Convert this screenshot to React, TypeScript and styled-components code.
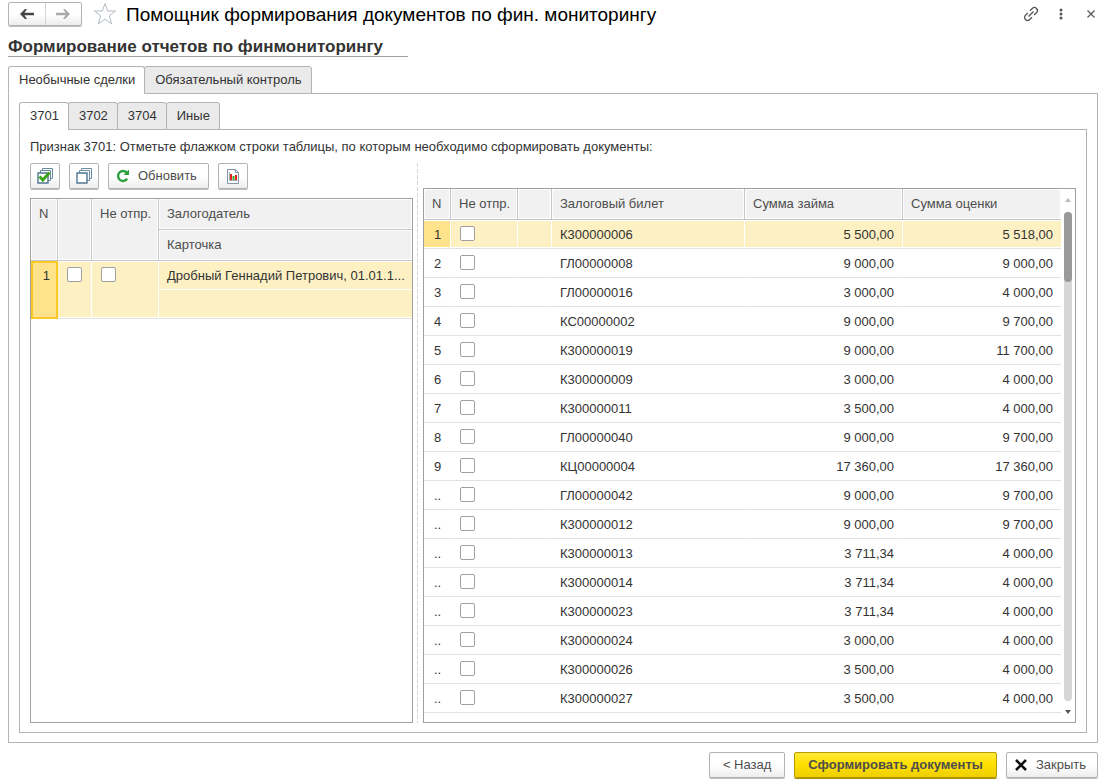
import React, { useState } from "react";
import styled, { createGlobalStyle, css } from "styled-components";

const GlobalStyle = createGlobalStyle`
  * { box-sizing: border-box; }
  body {
    margin: 0;
    background: #fff;
    color: #333;
    font: 13px/16px "Liberation Sans", Arial, sans-serif;
  }
  button, input { font: inherit; color: inherit; }
`;

const Page = styled.main`
  display: flex;
  flex-direction: column;
  min-height: 100vh;
  padding: 2px 6px 6px 8px;
`;

const Header = styled.header`
  display: flex;
  align-items: flex-start;
  height: 25px;
`;

const buttonFace = css`
  border: 1px solid #b3b3b3;
  border-radius: 2px;
  background: linear-gradient(#fff 50%, #ededed);
  box-shadow: 0 1px 0 #bdbdbd;
`;

const NavGroup = styled.nav`
  ${buttonFace}
  display: flex;
  width: 74px;
  height: 24px;
`;

const NavButton = styled.button`
  flex: 1;
  display: grid;
  place-items: center;
  padding: 0;
  border: 0;
  background: none;
  & + & { border-left: 1px solid #d2d2d2; }
`;

const IconButton = styled.button`
  display: grid;
  place-items: center;
  width: 30px;
  height: 24px;
  padding: 0;
  border: 0;
  background: none;
`;

const StarButton = styled(IconButton)`
  margin: 0 6px 0 8px;
`;

const Title = styled.h1`
  flex: 1;
  margin: 0;
  color: #000;
  font-size: 19px;
  line-height: 25px;
  font-weight: 400;
`;

const Tools = styled.div`
  display: flex;
  margin-right: -8px;
`;

const Section = styled.h2`
  width: 400px;
  max-width: 100%;
  height: 20px;
  margin: 10px 0 9px;
  border-bottom: 1px solid #a0a0a0;
  font-size: 17px;
  line-height: 19px;
  font-weight: 700;
  white-space: nowrap;
`;

const TabList = styled.div`
  display: flex;
  margin-bottom: -1px;
`;

const Tab = styled.button<{ $active: boolean }>`
  height: 28px;
  padding: 0 9px 0 10px;
  border: 1px solid #b3b3b3;
  border-bottom-color: ${(p) => (p.$active ? "#fff" : "#b3b3b3")};
  border-radius: 3px 3px 0 0;
  background: ${(p) => (p.$active ? "#fff" : "#eaeaea")};
  white-space: nowrap;
  z-index: 1;
  & + & { margin-left: -1px; }
`;

const Panel = styled.section`
  flex: 1;
  display: flex;
  flex-direction: column;
  padding: 8px 10px 9px;
  border: 1px solid #b3b3b3;
`;

const Message = styled.p`
  margin: 0 0 8px;
  line-height: 17px;
`;

const Panes = styled.div`
  flex: 1;
  display: grid;
  grid-template-columns: minmax(0, 383fr) 10px minmax(0, 653fr);
`;

const Pane = styled.div<{ $offset?: boolean }>`
  display: flex;
  flex-direction: column;
  gap: 9px;
  padding-top: ${(p) => (p.$offset ? "25px" : "0")};
`;

const Splitter = styled.div`
  width: 1px;
  margin-left: 4px;
  background: repeating-linear-gradient(#d4d4d4 0 4px, #fff 4px 6px);
`;

const Toolbar = styled.div`
  display: flex;
  gap: 9px;
`;

const buttonPadding = { plain: "0 13px", icon: "0 6px", leading: "0 11px 0 7px" };

const Button = styled.button<{ $primary?: boolean; $kind?: keyof typeof buttonPadding }>`
  ${buttonFace}
  display: flex;
  align-items: center;
  justify-content: center;
  gap: 8px;
  height: 26px;
  padding: ${(p) => buttonPadding[p.$kind ?? "plain"]};
  color: #4d4d4d;
  white-space: nowrap;
  ${(p) =>
    p.$primary &&
    css`
      border-color: #b39b00;
      background: linear-gradient(#ffea3a, #ffe000 45%, #efcf00);
      box-shadow: 0 1px 0 #a48e00;
      font-weight: 700;
    `}
`;

const GridFrame = styled.div`
  flex: 1;
  display: flex;
  align-items: stretch;
  border: 1px solid #a0a0a0;
`;

const GridBody = styled.div`
  flex: 1;
  min-width: 0;
`;

const Table = styled.table`
  width: 100%;
  table-layout: fixed;
  border-collapse: separate;
  border-spacing: 0;
`;

const Th = styled.th<{ $last?: boolean }>`
  height: 31px;
  padding: 7px 8px;
  border: 0 solid #c6c6c6;
  border-width: 0 ${(p) => (p.$last ? "0" : "1px")} 1px 0;
  background: #f1f1f1;
  box-shadow: inset 0 0 0 1px #fff;
  color: #4d4d4d;
  font-weight: 400;
  text-align: left;
  vertical-align: top;
  white-space: nowrap;
`;

const cellPadding = { text: "7px 8px 5px", number: "7px 4px 5px 10px", check: "6px 9px" };

const Td = styled.td<{
  $selected?: boolean;
  $kind?: keyof typeof cellPadding;
  $align?: "right";
  $soft?: boolean;
}>`
  height: 29px;
  padding: ${(p) => cellPadding[p.$kind ?? "text"]};
  border-bottom: 1px solid ${(p) => (p.$soft ? "#fff" : "#e2e2e2")};
  border-right: ${(p) => (p.$selected ? "1px solid #fff" : "1px solid transparent")};
  text-align: ${(p) => p.$align ?? "left"};
  vertical-align: top;
  white-space: nowrap;
  ${(p) =>
    p.$selected &&
    css`
      background: ${p.$kind === "number" ? "#ffe38c" : "#fdf1c4"};
      box-shadow: inset 0 1px 0 #fff, inset 0 -1px 0 ${p.$soft ? "#fdf1c4" : "#fff"};
    `}
  &:last-child { border-right: 0; }
`;

const FocusTd = styled(Td)`
  padding: 5px 6px;
  border: 2px solid #f9c928;
  box-shadow: none;
  text-align: right;
`;

const SecondLineTd = styled(Td)`
  box-shadow: inset 0 -1px 0 #fff;
`;

const Check = styled.input`
  appearance: none;
  display: block;
  width: 15px;
  height: 15px;
  margin: 0;
  border: 1px solid #a0a0a0;
  border-radius: 2px;
  background: #fff;
  &:checked { background: #5a9e3a; }
`;

const ScrollBar = styled.div`
  display: flex;
  flex-direction: column;
  align-items: center;
  gap: 9px;
  width: 14px;
  padding: 9px 0 8px;
`;

const Track = styled.div`
  flex: 1;
  width: 8px;
  border-radius: 4px;
  background: #d6d6d6;
`;

const Thumb = styled.div`
  height: 70px;
  border-radius: 4px;
  background: #999;
`;

const Footer = styled.footer`
  display: flex;
  justify-content: flex-end;
  gap: 9px;
  margin-top: 9px;
`;

const Arrow = ({ back }: { back?: boolean }) => (
  <svg width="16" height="12" viewBox="0 0 16 12" fill={back ? "#444" : "#aaa"}>
    <path
      d={
        back
          ? "M1 6 6 1H8L5.500 4.700H15V7.300H5.500L8 11H6z"
          : "M15 6 10 1H8L10.500 4.700H1V7.300H10.500L8 11H10z"
      }
    />
  </svg>
);

const StackIcon = ({ checked }: { checked?: boolean }) => (
  <svg width="16" height="16" viewBox="0 0 16 16" fill="#fff" stroke="#6b8ba2">
    <path d="M5.500.5h10v10h-10z" />
    <path d="M3.500 2.500h10v10h-10z" />
    <path d="M1 5h10v10H1z" stroke="#4f7691" strokeWidth="1.400" />
    {checked && <path d="M2.500 8.500 5.800 12 12.500 4.500" fill="none" stroke="#3fa51c" strokeWidth="3" />}
  </svg>
);

const RefreshIcon = () => (
  <svg width="14" height="14" viewBox="0 0 14 14" fill="none">
    <path d="M10.800 3.600A5 5 0 1 0 11.200 9.800" stroke="#2ba13c" strokeWidth="2.400" />
    <path d="M13 .5V6H7.500z" fill="#2ba13c" />
  </svg>
);

const ReportIcon = () => (
  <svg width="16" height="15" viewBox="-1 0 16 15">
    <path d="M1.500.5h8l3 3v11h-11z" fill="#fff" stroke="#8496a5" />
    <path d="M9.500.5v3h3" fill="none" stroke="#8496a5" />
    <path d="M3.500 3v8.500h8" fill="none" stroke="#9fb0bd" />
    <path d="M4 5h2v6H4z" fill="#e8231c" />
    <path d="M6.500 7h2v4h-2z" fill="#36a832" />
    <path d="M9 6h2v5H9z" fill="#e8231c" />
  </svg>
);

const rows = [
  ["К300000006", "5 500,00", "5 518,00"],
  ["ГЛ00000008", "9 000,00", "9 000,00"],
  ["ГЛ00000016", "3 000,00", "4 000,00"],
  ["КС00000002", "9 000,00", "9 700,00"],
  ["К300000019", "9 000,00", "11 700,00"],
  ["К300000009", "3 000,00", "4 000,00"],
  ["К300000011", "3 500,00", "4 000,00"],
  ["ГЛ00000040", "9 000,00", "9 700,00"],
  ["КЦ00000004", "17 360,00", "17 360,00"],
  ["ГЛ00000042", "9 000,00", "9 700,00"],
  ["К300000012", "9 000,00", "9 700,00"],
  ["К300000013", "3 711,34", "4 000,00"],
  ["К300000014", "3 711,34", "4 000,00"],
  ["К300000023", "3 711,34", "4 000,00"],
  ["К300000024", "3 000,00", "4 000,00"],
  ["К300000026", "3 500,00", "4 000,00"],
  ["К300000027", "3 500,00", "4 000,00"],
];

function Tabs({ label, items }: { label: string; items: string[] }) {
  const [active, setActive] = useState(0);
  return (
    <TabList role="tablist" aria-label={label}>
      {items.map((t, i) => (
        <Tab key={t} role="tab" aria-selected={i === active} $active={i === active} onClick={() => setActive(i)}>
          {t}
        </Tab>
      ))}
    </TabList>
  );
}

function Columns({ widths }: { widths: number[] }) {
  return (
    <colgroup>
      {widths.map((w, i) => (
        <col key={i} width={w} />
      ))}
    </colgroup>
  );
}

function PledgerTable() {
  return (
    <Table>
      <Columns widths={[27, 34, 67, 253]} />
      <thead>
        <tr>
          <Th rowSpan={2}>N</Th>
          <Th rowSpan={2} />
          <Th rowSpan={2}>Не отпр.</Th>
          <Th $last>Залогодатель</Th>
        </tr>
        <tr>
          <Th $last>Карточка</Th>
        </tr>
      </thead>
      <tbody>
        <tr>
          <FocusTd rowSpan={2} $selected $kind="number">1</FocusTd>
          <Td rowSpan={2} $selected $kind="check"><Check type="checkbox" aria-label="Выбрать строку 1" /></Td>
          <Td rowSpan={2} $selected $kind="check"><Check type="checkbox" aria-label="Не отправлять строку 1" /></Td>
          <Td $selected $soft>Дробный Геннадий Петрович, 01.01.1...</Td>
        </tr>
        <tr>
          <SecondLineTd $selected />
        </tr>
      </tbody>
    </Table>
  );
}

function TicketTable() {
  return (
    <Table>
      <Columns widths={[27, 67, 34, 193, 158, 158]} />
      <thead>
        <tr>
          <Th>N</Th>
          <Th>Не отпр.</Th>
          <Th />
          <Th>Залоговый билет</Th>
          <Th>Сумма займа</Th>
          <Th $last>Сумма оценки</Th>
        </tr>
      </thead>
      <tbody>
        {rows.map(([ticket, loan, value], i) => (
          <tr key={ticket}>
            <Td $selected={i === 0} $kind="number">{i < 9 ? i + 1 : ".."}</Td>
            <Td $selected={i === 0} $kind="check"><Check type="checkbox" aria-label={`Не отправлять ${ticket}`} /></Td>
            <Td $selected={i === 0} />
            <Td $selected={i === 0}>{ticket}</Td>
            <Td $selected={i === 0} $align="right">{loan}</Td>
            <Td $selected={i === 0} $align="right">{value}</Td>
          </tr>
        ))}
      </tbody>
    </Table>
  );
}

export default function App() {
  return (
    <>
      <GlobalStyle />
      <Page>
        <Header>
          <NavGroup aria-label="История">
            <NavButton aria-label="Назад"><Arrow back /></NavButton>
            <NavButton aria-label="Вперед"><Arrow /></NavButton>
          </NavGroup>
          <StarButton aria-label="В избранное">
            <svg width="24" height="24" viewBox="0 0 24 24" fill="none" stroke="#b4bcc4">
              <path d="M12 1.500 14.700 9H22.500L16.300 13.800 18.700 22 12 17.200 5.300 22 7.700 13.800 1.500 9H9.300z" />
            </svg>
          </StarButton>
          <Title>Помощник формирования документов по фин. мониторингу</Title>
          <Tools>
            <IconButton aria-label="Ссылка">
              <svg width="18" height="18" viewBox="0 0 18 18" fill="none" stroke="#555" strokeWidth="1.300">
                <g transform="rotate(-45 9 9)">
                  <path d="M7.500 6H4.200a3 3 0 0 0 0 6H7.500M10.500 6H13.800a3 3 0 0 1 0 6H10.500M5.500 9h7" />
                </g>
              </svg>
            </IconButton>
            <IconButton aria-label="Меню">
              <svg width="4" height="12" viewBox="0 0 4 12" fill="#555">
                <circle cx="2" cy="2" r="1.500" />
                <circle cx="2" cy="6" r="1.500" />
                <circle cx="2" cy="10" r="1.500" />
              </svg>
            </IconButton>
            <IconButton aria-label="Закрыть окно">
              <svg width="8" height="8" viewBox="0 0 8 8" stroke="#555" strokeWidth="1.200">
                <path d="M.5.5l7 7M7.500.5l-7 7" />
              </svg>
            </IconButton>
          </Tools>
        </Header>

        <Section>Формирование отчетов по финмониторингу</Section>

        <Tabs label="Виды контроля" items={["Необычные сделки", "Обязательный контроль"]} />
        <Panel>
          <Tabs label="Признаки" items={["3701", "3702", "3704", "Иные"]} />
          <Panel>
            <Message>Признак 3701: Отметьте флажком строки таблицы, по которым необходимо сформировать документы:</Message>
            <Panes>
              <Pane>
                <Toolbar>
                  <Button $kind="icon" aria-label="Отметить все"><StackIcon checked /></Button>
                  <Button $kind="icon" aria-label="Снять отметки"><StackIcon /></Button>
                  <Button $kind="leading"><RefreshIcon />Обновить</Button>
                  <Button $kind="icon" aria-label="Отчет"><ReportIcon /></Button>
                </Toolbar>
                <GridFrame>
                  <GridBody><PledgerTable /></GridBody>
                </GridFrame>
              </Pane>
              <Splitter />
              <Pane $offset>
                <GridFrame>
                  <GridBody><TicketTable /></GridBody>
                  <ScrollBar>
                    <svg width="6" height="5" viewBox="0 0 6 5"><path d="M3 0 6 4H0z" fill="#bbb" /></svg>
                    <Track><Thumb /></Track>
                    <svg width="6" height="4" viewBox="0 0 6 4"><path d="M0 0h6L3 4z" fill="#555" /></svg>
                  </ScrollBar>
                </GridFrame>
              </Pane>
            </Panes>
          </Panel>
        </Panel>

        <Footer>
          <Button>&lt; Назад</Button>
          <Button $primary>Сформировать документы</Button>
          <Button $kind="leading">
            <svg width="14" height="12" viewBox="-1 0 14 12" stroke="#111" strokeWidth="2.500"><path d="M1 1l10 10M11 1 1 11" /></svg>
            Закрыть
          </Button>
        </Footer>
      </Page>
    </>
  );
}
